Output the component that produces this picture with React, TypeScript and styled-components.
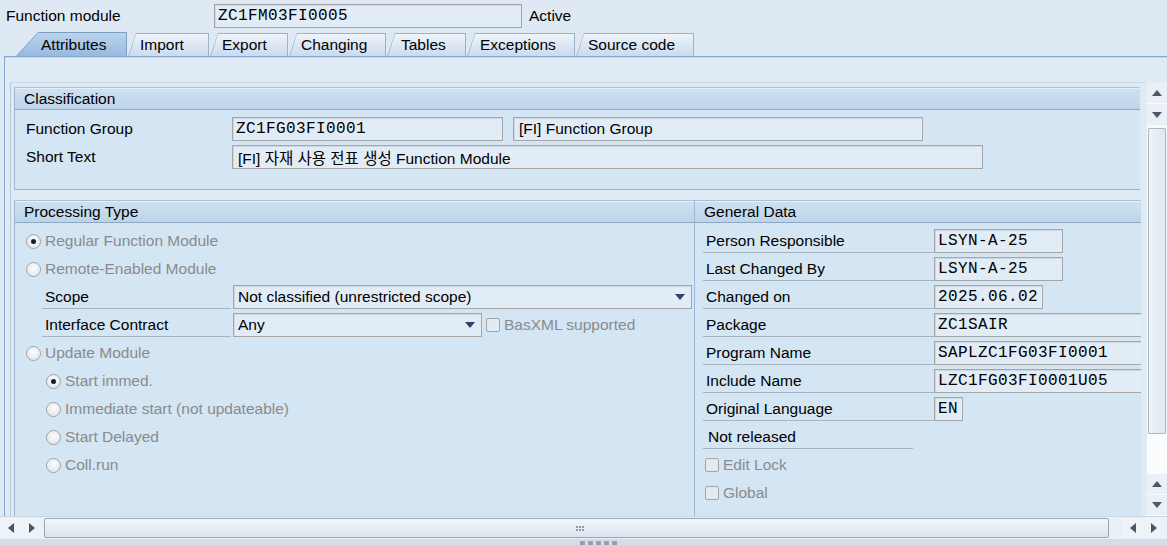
import React from 'react';
import styled, { createGlobalStyle, css } from 'styled-components';

const GlobalStyle = createGlobalStyle`
  html, body { margin: 0; padding: 0; }
  body {
    background: #dfe9f4;
    font-family: "Liberation Sans", "Noto Sans CJK KR", Arial, sans-serif;
    font-size: 15.5px;
    color: #000;
  }
`;

const Page = styled.div`
  width: 1167px;
  height: 545px;
  overflow: hidden;
  display: flex;
  flex-direction: column;
  background: #dfe9f4;
`;

const TopBar = styled.div`
  height: 32px;
  flex: none;
  display: flex;
  align-items: center;
  padding-left: 6px;
`;

const TopLabel = styled.span`
  width: 208px;
  flex: none;
`;

const StatusText = styled.span`
  margin-left: 7px;
`;

const Field = styled.div<{ $w: number; $prop?: boolean }>`
  width: ${p => p.$w}px;
  height: 24px;
  flex: none;
  box-sizing: border-box;
  border: 1px solid #a6a6a6;
  box-shadow: inset 1px 1px 0 #cfd8e0;
  background: #e2ecf6;
  display: flex;
  align-items: center;
  white-space: nowrap;
  overflow: hidden;
  ${p =>
    p.$prop
      ? css`
          padding-left: 5px;
          font-family: "Liberation Sans", "Noto Sans CJK KR", sans-serif;
          font-size: 15.5px;
        `
      : css`
          padding-left: 3px;
          font-family: "Liberation Mono", monospace;
          font-size: 16px;
          letter-spacing: 0.4px;
        `}
`;

const TabStrip = styled.div`
  height: 24px;
  flex: none;
  display: flex;
  align-items: flex-end;
  padding-left: 16px;
`;

const TabOuter = styled.div<{ $w: number; $slant: number; $active?: boolean }>`
  width: ${p => p.$w}px;
  height: ${p => (p.$active ? 24 : 23)}px;
  flex: none;
  box-sizing: border-box;
  padding: 1px 1px 0 1px;
  margin-right: 1px;
  background: ${p => (p.$active ? '#7d9fc4' : '#9ab2cb')};
  clip-path: polygon(${p => p.$slant}px 0, 100% 0, 100% 100%, 0 100%);
`;

const TabFace = styled.div<{ $slant: number; $pad: number; $active?: boolean }>`
  height: 100%;
  display: flex;
  align-items: center;
  padding-left: ${p => p.$pad}px;
  white-space: nowrap;
  background: ${p =>
    p.$active
      ? 'linear-gradient(#bcd4ed, #98badf)'
      : 'linear-gradient(#eef4fa, #c9dbee)'};
  clip-path: polygon(${p => p.$slant}px 0, 100% 0, 100% 100%, 0 100%);
`;

const Panel = styled.div`
  flex: none;
  height: 460px;
  margin-left: 4px;
  box-sizing: border-box;
  border-top: 1px solid #84a8cd;
  border-left: 1px solid #84a8cd;
  box-shadow: inset 0 1px 0 #c7d9ec;
  background: #dfeaf5;
  padding-top: 25px;
  display: flex;
`;

const ContentFrame = styled.div`
  flex: 1;
  height: 434px;
  margin-left: 5px;
  box-sizing: border-box;
  border-top: 1px solid #c6d8ea;
  border-left: 1px solid #b3cae1;
  padding: 4px 5px 0 3px;
  display: flex;
  flex-direction: column;
  overflow: hidden;
`;

const GroupBox = styled.div<{ $bottom?: boolean }>`
  display: flex;
  flex-direction: column;
  background: #d4e5f4;
  border-left: 1px solid #9cb8d4;
  overflow: hidden;
  ${p =>
    p.$bottom &&
    css`
      border-bottom: 1px solid #8fb1d2;
    `}
`;

const GroupHeader = styled.div`
  height: 23px;
  flex: none;
  box-sizing: border-box;
  border-top: 1px solid #a8c2dc;
  border-bottom: 1px solid #8ea8c2;
  box-shadow: inset 0 1px 0 #e6eff8;
  background: linear-gradient(#d0e1f1, #bdd4ea);
  display: flex;
  align-items: center;
  padding-left: 9px;
  white-space: nowrap;
`;

const GroupBody = styled.div<{ $pt: number; $pb: number }>`
  padding-top: ${p => p.$pt}px;
  padding-bottom: ${p => p.$pb}px;
  display: flex;
  flex-direction: column;
  flex: 1;
`;

const Classification = styled(GroupBox)`
  height: 102px;
  flex: none;
`;

const LowerGrid = styled.div`
  margin-top: 10px;
  flex: 1;
  display: grid;
  grid-template-columns: 680px 447px;
`;

const Row = styled.div<{ $pl: number }>`
  height: 28px;
  flex: none;
  display: flex;
  align-items: center;
  padding-left: ${p => p.$pl}px;
  white-space: nowrap;
`;

const LabelCell = styled.div<{ $w: number; $line?: boolean; $pad?: number }>`
  width: ${p => p.$w}px;
  height: 24px;
  flex: none;
  box-sizing: border-box;
  display: flex;
  align-items: center;
  padding-left: ${p => p.$pad ?? 3}px;
  border-bottom: ${p => (p.$line ? '1px solid #a8b4c0' : 'none')};
`;

const Spacer = styled.div<{ $w: number }>`
  width: ${p => p.$w}px;
  flex: none;
`;

const Option = styled.div`
  display: flex;
  align-items: center;
  gap: 4px;
  color: #8b8b8b;
`;

const Radio = styled.span<{ $on?: boolean }>`
  width: 15px;
  height: 15px;
  flex: none;
  box-sizing: border-box;
  border-radius: 50%;
  border: 1px solid #a2a2a2;
  background: radial-gradient(circle at 50% 40%, #fbfcfd, #dde3e9);
  position: relative;
  ${p =>
    p.$on &&
    css`
      &::after {
        content: '';
        position: absolute;
        left: 4px;
        top: 4px;
        width: 5px;
        height: 5px;
        border-radius: 50%;
        background: #1d1d1d;
      }
    `}
`;

const Check = styled.span`
  width: 14px;
  height: 14px;
  flex: none;
  box-sizing: border-box;
  border: 1px solid #a4a4a4;
  border-radius: 2px;
  background: #e2eaf2;
`;

const Dropdown = styled.div<{ $w: number }>`
  width: ${p => p.$w}px;
  height: 24px;
  flex: none;
  box-sizing: border-box;
  border: 1px solid #a6a6a6;
  box-shadow: inset 1px 1px 0 #cfd8e0;
  background: #e2ecf6;
  display: flex;
  align-items: center;
  padding: 0 6px 0 4px;
`;

const DropText = styled.span`
  flex: 1;
`;

const DropArrow = styled.span`
  width: 0;
  height: 0;
  border-left: 5px solid transparent;
  border-right: 5px solid transparent;
  border-top: 6px solid #2b4468;
`;

const VScroll = styled.div`
  width: 20px;
  height: 434px;
  flex: none;
  margin-left: 1px;
  background: #f6f9fc;
  border-left: 1px solid #e4ecf3;
  display: flex;
  flex-direction: column;
`;

const ScrollBtn = styled.div<{ $h?: number }>`
  height: ${p => p.$h ?? 21}px;
  flex: none;
  display: flex;
  align-items: center;
  justify-content: center;
  background: #eaf0f6;
  border-bottom: 1px solid #f8fafc;
`;

const Arrow = styled.span<{ $dir: 'up' | 'down' | 'left' | 'right' }>`
  width: 0;
  height: 0;
  ${p =>
    p.$dir === 'up'
      ? css`
          border-left: 5px solid transparent;
          border-right: 5px solid transparent;
          border-bottom: 6px solid #4a5868;
        `
      : p.$dir === 'down'
      ? css`
          border-left: 5px solid transparent;
          border-right: 5px solid transparent;
          border-top: 6px solid #4a5868;
        `
      : p.$dir === 'left'
      ? css`
          border-top: 5px solid transparent;
          border-bottom: 5px solid transparent;
          border-right: 6px solid #4a5868;
        `
      : css`
          border-top: 5px solid transparent;
          border-bottom: 5px solid transparent;
          border-left: 6px solid #4a5868;
        `}
`;

const Thumb = styled.div`
  height: 306px;
  flex: none;
  margin: 2px 1px 0 1px;
  box-sizing: border-box;
  border: 1px solid #aab7c4;
  border-radius: 1px;
  background: linear-gradient(90deg, #eef3f8, #dfe8f0);
`;

const TrackGap = styled.div`
  flex: 1;
  background: #fafcfd;
`;

const HScroll = styled.div`
  height: 23px;
  flex: none;
  display: flex;
  align-items: center;
  background: #eaf0f5;
  border-top: 1px solid #c9d5e0;
  box-sizing: border-box;
`;

const HBtn = styled.div<{ $w: number }>`
  width: ${p => p.$w}px;
  height: 20px;
  flex: none;
  display: flex;
  align-items: center;
  justify-content: center;
  background: #eef3f8;
`;

const HTrack = styled.div`
  width: 1065px;
  height: 20px;
  flex: none;
  box-sizing: border-box;
  border: 1px solid #97a7b7;
  border-radius: 2px;
  background: linear-gradient(#f2f6fa, #dbe4ed);
  display: flex;
  align-items: center;
  justify-content: center;
  margin-left: 2px;
`;

const Grip = styled.div`
  display: grid;
  grid-template-columns: repeat(3, 2px);
  grid-auto-rows: 2px;
  gap: 1px;
  margin-left: 6px;
`;

const GripDot = styled.span`
  background: #8d9aa8;
`;

const BottomStrip = styled.div`
  height: 6px;
  flex: none;
  background: #d3dee8;
  display: flex;
  justify-content: center;
  align-items: flex-end;
  gap: 3px;
  padding-left: 30px;
`;

const StripMark = styled.span`
  width: 5px;
  height: 4px;
  background: #95a3b1;
`;

const tabs = [
  { label: 'Attributes', w: 111, slant: 22, pad: 24, active: true },
  { label: 'Import', w: 81, slant: 8, pad: 11 },
  { label: 'Export', w: 78, slant: 8, pad: 11 },
  { label: 'Changing', w: 97, slant: 8, pad: 11 },
  { label: 'Tables', w: 79, slant: 8, pad: 13 },
  { label: 'Exceptions', w: 108, slant: 8, pad: 12 },
  { label: 'Source code', w: 118, slant: 8, pad: 11 },
];

const general = [
  { label: 'Person Responsible', value: 'LSYN-A-25', w: 129 },
  { label: 'Last Changed By', value: 'LSYN-A-25', w: 129 },
  { label: 'Changed on', value: '2025.06.02', w: 109 },
  { label: 'Package', value: 'ZC1SAIR', w: 230 },
  { label: 'Program Name', value: 'SAPLZC1FG03FI0001', w: 230 },
  { label: 'Include Name', value: 'LZC1FG03FI0001U05', w: 230 },
  { label: 'Original Language', value: 'EN', w: 29 },
];

export default function App() {
  return (
    <Page>
      <GlobalStyle />
      <TopBar>
        <TopLabel>Function module</TopLabel>
        <Field $w={308}>ZC1FM03FI0005</Field>
        <StatusText>Active</StatusText>
      </TopBar>

      <TabStrip>
        {tabs.map(t => (
          <TabOuter key={t.label} $w={t.w} $slant={t.slant} $active={t.active}>
            <TabFace $slant={t.slant - 1} $pad={t.pad} $active={t.active}>
              {t.label}
            </TabFace>
          </TabOuter>
        ))}
      </TabStrip>

      <Panel>
        <ContentFrame>
          <Classification $bottom>
            <GroupHeader>Classification</GroupHeader>
            <GroupBody $pt={5} $pb={0}>
              <Row $pl={11}>
                <LabelCell $w={206} $pad={0}>Function Group</LabelCell>
                <Field $w={271}>ZC1FG03FI0001</Field>
                <Spacer $w={10} />
                <Field $w={410} $prop>[FI] Function Group</Field>
              </Row>
              <Row $pl={11}>
                <LabelCell $w={206} $pad={0}>Short Text</LabelCell>
                <Field $w={751} $prop>[FI] 자재 사용 전표 생성 Function Module</Field>
              </Row>
            </GroupBody>
          </Classification>

          <LowerGrid>
            <GroupBox>
              <GroupHeader>Processing Type</GroupHeader>
              <GroupBody $pt={4} $pb={0}>
                <Row $pl={11}>
                  <Option>
                    <Radio $on />
                    Regular Function Module
                  </Option>
                </Row>
                <Row $pl={11}>
                  <Option>
                    <Radio />
                    Remote-Enabled Module
                  </Option>
                </Row>
                <Row $pl={27}>
                  <LabelCell $w={189} $line>Scope</LabelCell>
                  <Spacer $w={2} />
                  <Dropdown $w={459}>
                    <DropText>Not classified (unrestricted scope)</DropText>
                    <DropArrow />
                  </Dropdown>
                </Row>
                <Row $pl={27}>
                  <LabelCell $w={189} $line>Interface Contract</LabelCell>
                  <Spacer $w={2} />
                  <Dropdown $w={249}>
                    <DropText>Any</DropText>
                    <DropArrow />
                  </Dropdown>
                  <Spacer $w={4} />
                  <Option>
                    <Check />
                    BasXML supported
                  </Option>
                </Row>
                <Row $pl={11}>
                  <Option>
                    <Radio />
                    Update Module
                  </Option>
                </Row>
                <Row $pl={31}>
                  <Option>
                    <Radio $on />
                    Start immed.
                  </Option>
                </Row>
                <Row $pl={31}>
                  <Option>
                    <Radio />
                    Immediate start (not updateable)
                  </Option>
                </Row>
                <Row $pl={31}>
                  <Option>
                    <Radio />
                    Start Delayed
                  </Option>
                </Row>
                <Row $pl={31}>
                  <Option>
                    <Radio />
                    Coll.run
                  </Option>
                </Row>
              </GroupBody>
            </GroupBox>

            <GroupBox>
              <GroupHeader>General Data</GroupHeader>
              <GroupBody $pt={4} $pb={0}>
                {general.map(g => (
                  <Row key={g.label} $pl={8}>
                    <LabelCell $w={231} $line>{g.label}</LabelCell>
                    <Field $w={g.w}>{g.value}</Field>
                  </Row>
                ))}
                <Row $pl={8}>
                  <LabelCell $w={210} $line $pad={5}>Not released</LabelCell>
                </Row>
                <Row $pl={10}>
                  <Option>
                    <Check />
                    Edit Lock
                  </Option>
                </Row>
                <Row $pl={10}>
                  <Option>
                    <Check />
                    Global
                  </Option>
                </Row>
              </GroupBody>
            </GroupBox>
          </LowerGrid>
        </ContentFrame>

        <VScroll>
          <ScrollBtn>
            <Arrow $dir="up" />
          </ScrollBtn>
          <ScrollBtn>
            <Arrow $dir="down" />
          </ScrollBtn>
          <Thumb />
          <TrackGap />
          <ScrollBtn $h={20}>
            <Arrow $dir="up" />
          </ScrollBtn>
          <ScrollBtn $h={20}>
            <Arrow $dir="down" />
          </ScrollBtn>
        </VScroll>
      </Panel>

      <HScroll>
        <HBtn $w={21}>
          <Arrow $dir="left" />
        </HBtn>
        <HBtn $w={21}>
          <Arrow $dir="right" />
        </HBtn>
        <HTrack>
          <Grip>
            {Array.from({ length: 6 }).map((_, i) => (
              <GripDot key={i} />
            ))}
          </Grip>
        </HTrack>
        <Spacer $w={13} />
        <HBtn $w={21}>
          <Arrow $dir="left" />
        </HBtn>
        <HBtn $w={21}>
          <Arrow $dir="right" />
        </HBtn>
      </HScroll>
      <BottomStrip>
        {Array.from({ length: 5 }).map((_, i) => (
          <StripMark key={i} />
        ))}
      </BottomStrip>
    </Page>
  );
}
